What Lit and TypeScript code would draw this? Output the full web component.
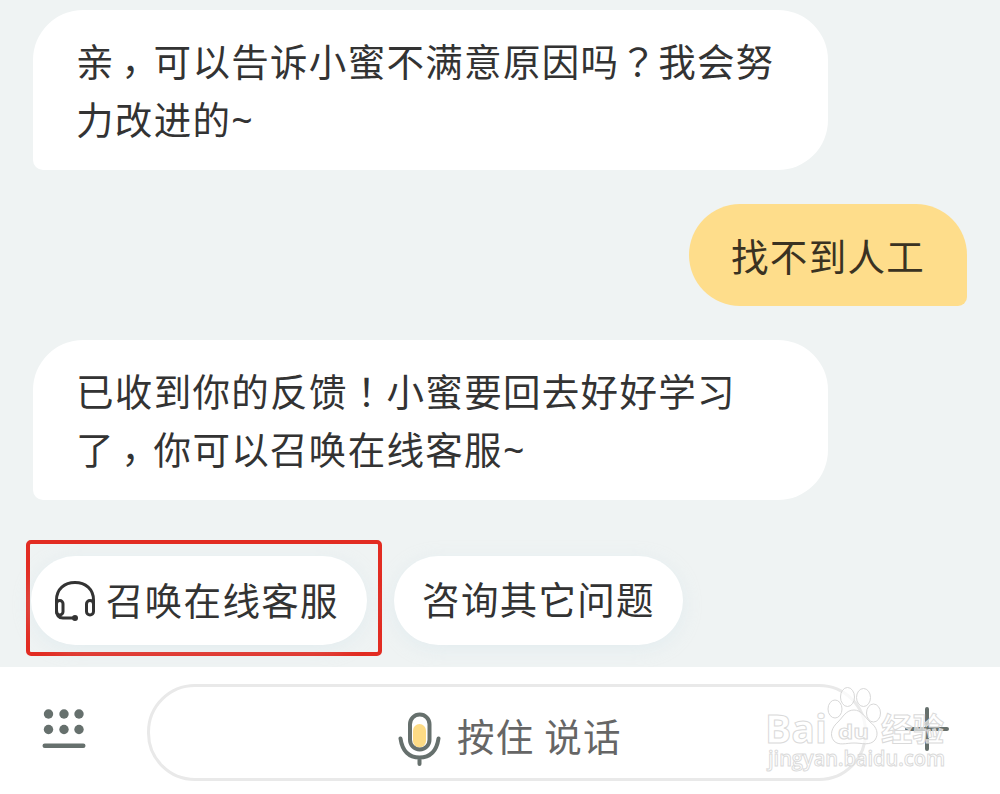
import { LitElement, html, svg, css } from 'lit';
import { customElement, property } from 'lit/decorators.js';

const PUNCTUATION: Record<string, string> = {
    '，': 'comma',
    '？': 'mark',
    '！': 'mark',
    '~': 'tilde',
};

const MESSAGES = [
    { from: 'bot', lines: ['亲，可以告诉小蜜不满意原因吗？我会努', '力改进的~'] },
    { from: 'me', lines: ['找不到人工'] },
    { from: 'bot', lines: ['已收到你的反馈！小蜜要回去好好学习', '了，你可以召唤在线客服~'] },
];

@customElement('chat-bubble')
export class ChatBubble extends LitElement {
    static styles = css`
        :host {
            display: block;
            box-sizing: border-box;
            width: 795px;
            height: 160px;
            padding: 21px 43px 0;
            border-radius: 50px 50px 50px 10px;
            background: #fff;
            line-height: 58.2px;
            white-space: nowrap;
        }

        :host([from="me"]) {
            align-self: flex-end;
            width: 278px;
            height: 102px;
            padding: 22px 42px 0;
            border-radius: 51px 51px 9px 51px;
            background: #fedd8b;
            color: #3a3222;
        }

        /* half-width comma centred in its cell */
        .comma {
            font-feature-settings: "halt";
            padding: 0 12.2px 0 6.5px;
            line-height: 1;
            vertical-align: 2px;
        }

        .mark {
            font-family: "Noto Sans CJK TC", sans-serif;
        }

        .tilde {
            font-family: "Noto Sans", sans-serif;
            line-height: 1;
        }
    `;

    @property({ reflect: true }) from = 'bot';
    @property({ attribute: false }) lines: string[] = [];

    render() {
        return this.lines.map(line => html`<div>${[...line].map(ch =>
            PUNCTUATION[ch] ? html`<span class=${PUNCTUATION[ch]}>${ch}</span>` : ch
        )}</div>`);
    }
}

@customElement('app-root')
export class AppRoot extends LitElement {
    static styles = css`
        :host {
            display: flex;
            flex-direction: column;
            box-sizing: border-box;
            position: relative;
            width: 1000px;
            height: 794px;
            overflow: hidden;
            background: #eff3f3;
            color: #333;
            font-family: "Noto Sans CJK SC", sans-serif;
            font-size: 37.5px;
            letter-spacing: 1.3px;
        }

        svg {
            display: block;
            flex: none;
        }

        .messages {
            display: flex;
            flex-direction: column;
            gap: 34px;
            padding: 10px 33px 0;
        }

        .actions {
            display: flex;
            align-items: center;
            gap: 12px;
            margin-top: 40px;
            padding-left: 26px;
        }

        .highlight {
            box-sizing: border-box;
            width: 356px;
            height: 116px;
            padding: 12px 1px;
            border: 4px solid #e22c22;
            border-radius: 5px;
        }

        .chip {
            display: flex;
            align-items: center;
            justify-content: center;
            box-sizing: border-box;
            width: 289px;
            height: 89px;
            border-radius: 45px;
            background: #fff;
            box-shadow: 0 4px 18px rgba(205, 225, 235, 0.35);
            white-space: nowrap;
            margin-top: 4px;
        }

        .chip span {
            padding-bottom: 5px;
        }

        .service {
            justify-content: flex-start;
            gap: 10px;
            width: 336px;
            padding-left: 23px;
            margin-top: 0;
        }

        .bar {
            display: flex;
            align-items: flex-start;
            box-sizing: border-box;
            height: 127px;
            margin-top: auto;
            padding: 17px 50px 0 42px;
            background: #fff;
            color: #666;
        }

        .keyboard {
            padding-top: 24px;
        }

        .plus {
            padding-top: 22px;
        }

        .talk {
            display: flex;
            align-items: center;
            box-sizing: border-box;
            width: 720px;
            height: 97px;
            margin: 0 37px 0 61px;
            padding-left: 248px;
            gap: 16px;
            border: 3px solid #e9e9e9;
            border-radius: 48px;
        }

        .talk svg {
            padding-top: 12px;
        }

        .talk span {
            white-space: pre;
            padding-top: 3px;
        }

        .watermark {
            position: absolute;
            left: 760px;
            top: 680px;
        }

        .watermark text {
            fill: #fff;
            fill-opacity: 0.65;
            stroke: #dadada;
            stroke-width: 1px;
            letter-spacing: 0;
        }

        .latin {
            font-family: "Open Sans", sans-serif;
            font-weight: bold;
        }

        .url {
            font-family: "Open Sans", sans-serif;
            font-weight: 600;
        }

        .han {
            font-family: "Noto Sans CJK SC", sans-serif;
            font-weight: bold;
        }
    `;

    headsetIcon() {
        return html`
            <svg width="42" height="42" viewBox="0 0 42 42" fill="none" stroke="#333" stroke-width="3" stroke-linecap="round">
                <path d="M2.500 25V20C2.500 9 10.500 2.500 21 2.500S39.500 9 39.500 20V28"/>
                <rect x="2.500" y="20.500" width="6.500" height="14.500" rx="3.200"/>
                <rect x="32.500" y="20.500" width="7" height="14.500" rx="3.500"/>
                <path d="M2.500 30C2.500 36 5 38 9 38H21"/>
                <circle cx="21" cy="38" r="3" fill="#333" stroke="none"/>
            </svg>
        `;
    }

    keyboardIcon() {
        const dots = [6.5, 22, 37].map(x => [6, 21.5].map(y => svg`<circle cx=${x} cy=${y} r="4.700"/>`));
        return html`
            <svg class="keyboard" width="44" height="42" viewBox="0 0 44 42" fill="#66706d">
                ${dots}
                <rect x="0.500" y="35.500" width="43" height="4.500" rx="2.200"/>
            </svg>
        `;
    }

    micIcon() {
        return html`
            <svg width="43" height="56" viewBox="0 0 43 56" fill="none" stroke="#66706d" stroke-width="4" stroke-linecap="round">
                <rect x="15" y="13" width="13" height="23.500" rx="6.500" fill="#fddb85" stroke="none"/>
                <rect x="12" y="3.500" width="19.500" height="35" rx="9.700"/>
                <path d="M2.500 27.500C4.500 41 12 46.500 21.500 46.500S38.500 41 40.500 27.500M21.500 47V53"/>
            </svg>
        `;
    }

    plusIcon() {
        return html`
            <svg class="plus" width="46" height="46" viewBox="0 0 46 46" stroke="#66706d" stroke-width="4" stroke-linecap="round">
                <path d="M3 23H43M23 3V43"/>
            </svg>
        `;
    }

    watermark() {
        return html`
            <svg class="watermark" width="200" height="100" viewBox="0 0 200 100">
                <text class="latin" x="5" y="63" font-size="40" textLength="62" lengthAdjust="spacingAndGlyphs">Bai</text>
                <g fill="#fff" fill-opacity="0.7" stroke="#d8d8d8" stroke-width="1">
                    <ellipse cx="75" cy="29" rx="7" ry="9"/>
                    <ellipse cx="87.500" cy="17" rx="7" ry="9.500"/>
                    <ellipse cx="103.500" cy="17.500" rx="7" ry="9"/>
                    <ellipse cx="113.500" cy="33" rx="7" ry="9"/>
                    <path d="M94 30C101 30 105 37 110 42C117 47 119 54 115 60C110 66 102 63 94 63S79 66 74 61C69 55 72 47 78 42C83 37 86 30 94 30Z"/>
                </g>
                <text class="latin" x="78" y="59" font-size="20" textLength="31" lengthAdjust="spacingAndGlyphs">du</text>
                <text class="han" x="121" y="61" font-size="32" textLength="63" lengthAdjust="spacingAndGlyphs">经验</text>
                <text class="url" x="8" y="86" font-size="21" textLength="177" lengthAdjust="spacingAndGlyphs">jingyan.baidu.com</text>
            </svg>
        `;
    }

    render() {
        return html`
            <div class="messages">
                ${MESSAGES.map(m => html`<chat-bubble from=${m.from} .lines=${m.lines}></chat-bubble>`)}
            </div>
            <div class="actions">
                <div class="highlight">
                    <div class="chip service">${this.headsetIcon()}<span>召唤在线客服</span></div>
                </div>
                <div class="chip"><span>咨询其它问题</span></div>
            </div>
            <div class="bar">
                ${this.keyboardIcon()}
                <div class="talk">${this.micIcon()}<span>按住 说话</span></div>
                ${this.plusIcon()}
            </div>
            ${this.watermark()}
        `;
    }
}
